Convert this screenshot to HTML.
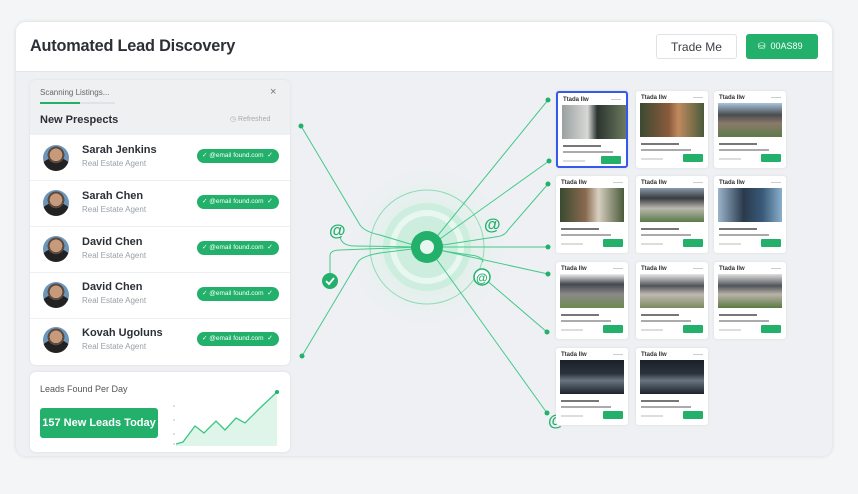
<!DOCTYPE html>
<html><head><meta charset="utf-8"><style>
*{margin:0;padding:0;box-sizing:border-box}
body{width:858px;height:494px;background:#f4f5f6;font-family:"Liberation Sans",sans-serif;position:relative;overflow:hidden}
.a{position:absolute}
.main{left:16px;top:22px;width:816px;height:434px;background:#eef0f3;border-radius:10px;box-shadow:0 0 4px rgba(0,0,0,.12);overflow:hidden}
.hdr{left:0;top:0;width:816px;height:50px;background:#fff;border-bottom:1px solid #e3e5e8}
.row{left:0;width:260px;height:45px;background:#fff}
.av{left:13px;width:26px;height:26px;border-radius:50%;background:radial-gradient(circle at 50% 38%,#c89a7c 0 30%,#5a4a40 31% 40%,transparent 41%),radial-gradient(circle at 50% 120%,#222 0 55%,#6d95b8 56%)}
.nm{left:52px;font-size:11px;font-weight:bold;color:#2b2f36}
.rl{left:52px;font-size:8px;color:#9aa0a8}
.bd{left:167px;width:82px;height:14px;border-radius:7px;background:#22b06b;color:#fff;font-size:6.5px;line-height:14px;padding-left:5px;white-space:nowrap;overflow:hidden}
.bd:after{content:"✓";position:absolute;right:6px;font-size:7px}
.sep{left:52px;width:208px;height:1px;background:#eceef1}
.card{width:72px;height:77px;background:#fff;border-radius:3px;box-shadow:0 0 3px rgba(0,0,0,.08)}
.card .t{left:5px;top:4px;font-size:6px;font-weight:bold;color:#333}
.card .d{right:5px;top:6px;width:10px;height:1px;background:#ccc}
.card .im{left:4px;top:12px;width:64px;height:34px}
.card .l1{left:5px;top:52px;width:38px;height:2px;background:#777}
.card .l2{left:5px;top:58px;width:50px;height:2px;background:#aaa}
.card .l3{left:5px;top:67px;width:22px;height:2px;background:#ddd}
.card .b{right:5px;top:63px;width:20px;height:8px;background:#22b06b;border-radius:1px}
</style></head><body>
<div class="a main">
 <div class="a hdr">
  <div class="a" style="left:14px;top:15px;font-size:16.3px;font-weight:bold;color:#2c3036;letter-spacing:-.2px">Automated Lead Discovery</div>
  <div class="a" style="left:640px;top:12px;width:81px;height:25px;border:1px solid #e0e2e5;border-radius:3px;font-size:12px;color:#3a3e44;text-align:center;line-height:24px">Trade Me</div>
  <div class="a" style="left:730px;top:12px;width:72px;height:25px;background:#22b06b;border-radius:3px;font-size:9px;color:#fff;line-height:25px;padding-left:12px">⛁&nbsp; 00AS89</div>
 </div>
</div>
<div class="a" style="left:30px;top:80px;width:260px;height:285px;background:#eef0f2;border-radius:6px;box-shadow:0 0 3px rgba(0,0,0,.08);overflow:hidden">
 <div class="a" style="left:10px;top:8px;font-size:8px;color:#666">Scanning Listings...</div>
 <div class="a" style="left:10px;top:22px;width:75px;height:2px;background:#e0e2e5"></div>
 <div class="a" style="left:10px;top:22px;width:40px;height:2px;background:#22b06b"></div>
 <div class="a" style="left:240px;top:6px;font-size:11px;color:#777">×</div>
 <div class="a" style="left:10px;top:34px;font-size:11px;font-weight:bold;color:#2b2f36">New Prespects</div>
 <div class="a" style="left:200px;top:35px;font-size:7px;color:#aaa">◷ Refreshed</div>
 <div class="a row" style="top:55px"><div class="a av" style="top:10px"></div><div class="a nm" style="top:9px">Sarah Jenkins</div><div class="a rl" style="top:24px">Real Estate Agent</div><div class="a bd" style="top:14px">✓ @email found.com</div></div>
 <div class="a sep" style="top:100px"></div>
 <div class="a row" style="top:101px"><div class="a av" style="top:9px"></div><div class="a nm" style="top:9px">Sarah Chen</div><div class="a rl" style="top:24px">Real Estate Agent</div><div class="a bd" style="top:14px">✓ @email found.com</div></div>
 <div class="a sep" style="top:146px"></div>
 <div class="a row" style="top:147px"><div class="a av" style="top:9px"></div><div class="a nm" style="top:9px">David Chen</div><div class="a rl" style="top:24px">Real Estate Agent</div><div class="a bd" style="top:14px">✓ @email found.com</div></div>
 <div class="a sep" style="top:192px"></div>
 <div class="a row" style="top:193px"><div class="a av" style="top:9px"></div><div class="a nm" style="top:8px">David Chen</div><div class="a rl" style="top:23px">Real Estate Agent</div><div class="a bd" style="top:14px">✓ @email found.com</div></div>
 <div class="a sep" style="top:238px"></div>
 <div class="a row" style="top:239px;height:46px"><div class="a av" style="top:8px"></div><div class="a nm" style="top:8px">Kovah Ugoluns</div><div class="a rl" style="top:23px">Real Estate Agent</div><div class="a bd" style="top:13px">✓ @email found.com</div></div>
</div>
<div class="a" style="left:30px;top:372px;width:260px;height:80px;background:#fff;border-radius:6px;box-shadow:0 0 3px rgba(0,0,0,.08)">
 <div class="a" style="left:10px;top:12px;font-size:9px;color:#555">Leads Found Per Day</div>
 <div class="a" style="left:10px;top:36px;width:118px;height:30px;background:#22b06b;border-radius:3px;color:#fff;font-size:11px;font-weight:bold;text-align:center;line-height:30px">157 New Leads Today</div>
 <svg class="a" style="left:140px;top:14px" width="115" height="66"><g fill="#bbb"><circle cx="4" cy="20" r=".8"/><circle cx="4" cy="34" r=".8"/><circle cx="4" cy="48" r=".8"/><circle cx="4" cy="58" r=".8"/></g><path d="M6 58 L13 56 L25 40 L34 47 L46 35 L55 44 L66 32 L75 37 L90 22 L107 6 L107 60 L6 60Z" fill="#dff5e9"/><path d="M6 58 L13 56 L25 40 L34 47 L46 35 L55 44 L66 32 L75 37 L90 22 L107 6" fill="none" stroke="#3cc684" stroke-width="1.3"/><circle cx="107" cy="6" r="2" fill="#22b06b"/></svg>
</div>
<svg class="a" style="left:0;top:0" width="858" height="494">
 <defs><radialGradient id="g"><stop offset="0" stop-color="#bfe9d3" stop-opacity=".9"/><stop offset="1" stop-color="#e6f5ee" stop-opacity="0"/></radialGradient></defs>
 <circle cx="427" cy="247" r="82" fill="url(#g)"/>
 <circle cx="427" cy="247" r="57" fill="none" stroke="#8fdcb5" stroke-width="1"/>
 <circle cx="427" cy="247" r="44" fill="#cdeede"/>
 <circle cx="427" cy="247" r="37" fill="#e8f7ef"/>
 <circle cx="427" cy="247" r="31" fill="#cdeede"/>
 <g fill="none" stroke="#45c98a" stroke-width="1">
  <path d="M301 126 L360 225 Q365 232 380 235 L420 247"/>
  <path d="M302 356 L358 262 Q362 256 380 253 L420 248"/>
  <path d="M340 237 Q342 246 355 246 L420 247"/>
  <path d="M330 280 L330 255 Q331 250 340 250 L420 247"/>
  <path d="M548 100 L430 245"/>
  <path d="M549 161 L430 246"/>
  <path d="M548 184 L508 230 Q505 236 495 237 L430 247"/>
  <path d="M548 247 L430 247"/>
  <path d="M548 274 L430 248"/>
  <path d="M547 332 L485 279 M483 262 Q482 256 470 255 L430 249"/>
  <path d="M547 413 L430 250"/>
 </g>
 <g fill="#22b06b">
  <circle cx="301" cy="126" r="2.5"/><circle cx="302" cy="356" r="2.5"/>
  <circle cx="548" cy="100" r="2.5"/><circle cx="549" cy="161" r="2.5"/><circle cx="548" cy="184" r="2.5"/><circle cx="548" cy="247" r="2.5"/><circle cx="548" cy="274" r="2.5"/><circle cx="547" cy="332" r="2.5"/><circle cx="547" cy="413" r="2.5"/>
  <circle cx="330" cy="281" r="8"/>
  <circle cx="427" cy="247" r="16"/>
 </g>
 <circle cx="427" cy="247" r="7" fill="#e8f7ef"/>
 <path d="M326 281 L329 284 L334 278" stroke="#fff" stroke-width="1.8" fill="none"/>
 <circle cx="482" cy="277" r="8" fill="#fff" stroke="#22b06b" stroke-width="1.5"/>
 <g font-family="Liberation Sans" font-weight="bold" fill="#22b06b">
  <text x="329" y="236" font-size="17">@</text>
  <text x="484" y="230" font-size="17">@</text>
  <text x="476" y="282" font-size="12">@</text>
  <text x="548" y="426" font-size="17">@</text>
 </g>
</svg>
<div class="a card" style="left:556px;top:91px;border:2px solid #3458f0"><div class="a t">Ttada Ilw</div><div class="a d"></div><div class="a im" style="background:linear-gradient(90deg,#9aa0a0,#d8d8d6 40%,#2c3430 55%,#6b7a5e)"></div><div class="a l1"></div><div class="a l2"></div><div class="a l3"></div><div class="a b"></div></div>
<div class="a card" style="left:636px;top:91px"><div class="a t">Ttada Ilw</div><div class="a d"></div><div class="a im" style="background:linear-gradient(90deg,#3c4a32,#8b5a3c 45%,#c08a60 60%,#4a5a3a)"></div><div class="a l1"></div><div class="a l2"></div><div class="a l3"></div><div class="a b"></div></div>
<div class="a card" style="left:714px;top:91px"><div class="a t">Ttada Ilw</div><div class="a d"></div><div class="a im" style="background:linear-gradient(180deg,#a8c4dc,#4a4c50 35%,#8a7a6a 60%,#5e7a48)"></div><div class="a l1"></div><div class="a l2"></div><div class="a l3"></div><div class="a b"></div></div>
<div class="a card" style="left:556px;top:176px"><div class="a t">Ttada Ilw</div><div class="a d"></div><div class="a im" style="background:linear-gradient(90deg,#3a4a30,#8a6a50 40%,#d8cfc0 60%,#4a5a3a)"></div><div class="a l1"></div><div class="a l2"></div><div class="a l3"></div><div class="a b"></div></div>
<div class="a card" style="left:636px;top:176px"><div class="a t">Ttada Ilw</div><div class="a d"></div><div class="a im" style="background:linear-gradient(180deg,#8a9aa8,#3a3c40 30%,#bab8b0 60%,#5a7a48)"></div><div class="a l1"></div><div class="a l2"></div><div class="a l3"></div><div class="a b"></div></div>
<div class="a card" style="left:714px;top:176px"><div class="a t">Ttada Ilw</div><div class="a d"></div><div class="a im" style="background:linear-gradient(90deg,#9ab4cc,#2a3a4c 40%,#3a5a7a 70%,#8ab0cc)"></div><div class="a l1"></div><div class="a l2"></div><div class="a l3"></div><div class="a b"></div></div>
<div class="a card" style="left:556px;top:262px"><div class="a t">Ttada Ilw</div><div class="a d"></div><div class="a im" style="background:linear-gradient(180deg,#f0f0f0,#444850 30%,#8a8a88 60%,#6a8a50)"></div><div class="a l1"></div><div class="a l2"></div><div class="a l3"></div><div class="a b"></div></div>
<div class="a card" style="left:636px;top:262px"><div class="a t">Ttada Ilw</div><div class="a d"></div><div class="a im" style="background:linear-gradient(180deg,#e8e8e8,#505458 35%,#c0b8b0 60%,#7a8a60)"></div><div class="a l1"></div><div class="a l2"></div><div class="a l3"></div><div class="a b"></div></div>
<div class="a card" style="left:714px;top:262px"><div class="a t">Ttada Ilw</div><div class="a d"></div><div class="a im" style="background:linear-gradient(180deg,#e0e0e0,#50545a 35%,#bab2a8 60%,#5a7a40)"></div><div class="a l1"></div><div class="a l2"></div><div class="a l3"></div><div class="a b"></div></div>
<div class="a card" style="left:556px;top:348px"><div class="a t">Ttada Ilw</div><div class="a d"></div><div class="a im" style="background:linear-gradient(180deg,#1a2028,#2a323c 40%,#6a7480 60%,#1c222a)"></div><div class="a l1"></div><div class="a l2"></div><div class="a l3"></div><div class="a b"></div></div>
<div class="a card" style="left:636px;top:348px"><div class="a t">Ttada Ilw</div><div class="a d"></div><div class="a im" style="background:linear-gradient(180deg,#1a2028,#2a323c 40%,#6a7480 60%,#1c222a)"></div><div class="a l1"></div><div class="a l2"></div><div class="a l3"></div><div class="a b"></div></div>
</body></html>
